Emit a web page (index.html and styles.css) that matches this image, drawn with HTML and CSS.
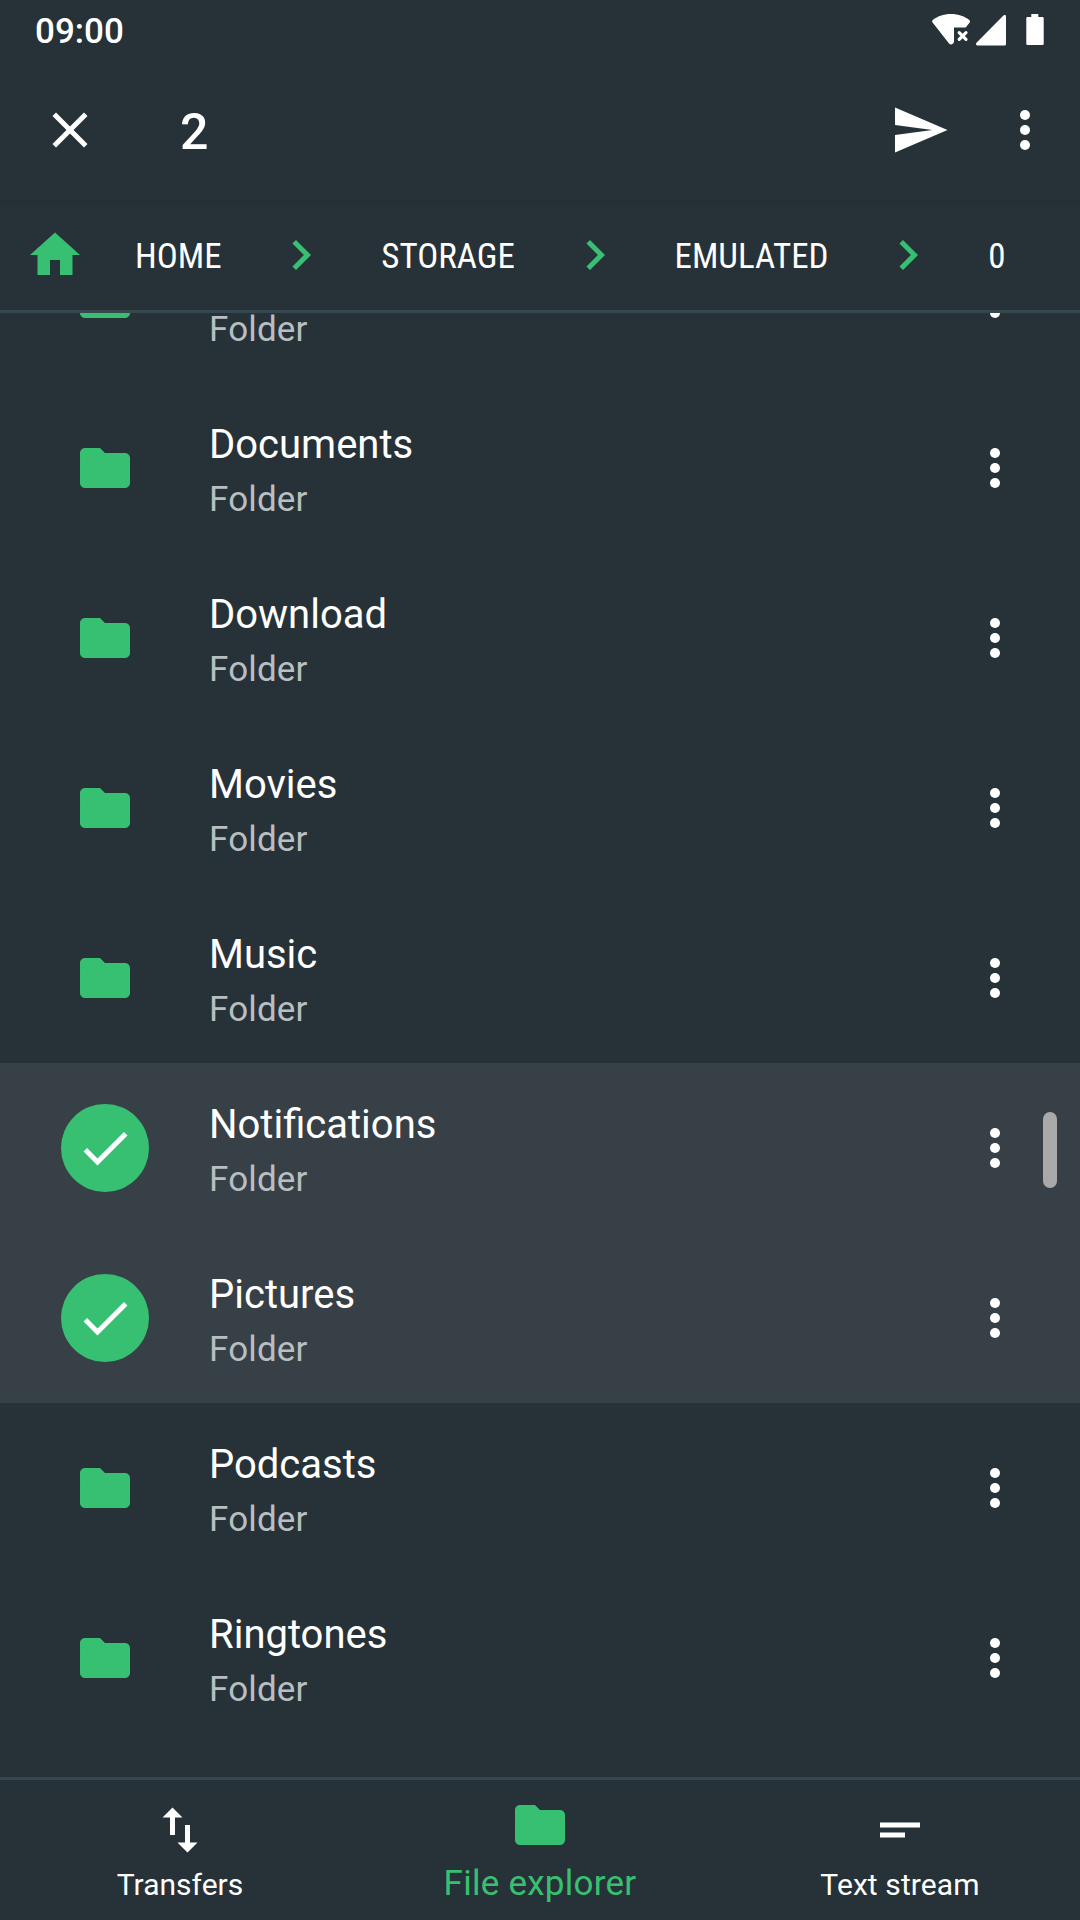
FILE: index.html
```html
<!DOCTYPE html>
<html lang="en">
<head>
<meta charset="utf-8">
<title>File explorer</title>
<link rel="stylesheet" href="styles.css">
</head>
<body>
<svg class="sprite" aria-hidden="true">
  <symbol id="folder" viewBox="0 0 24 24"><path d="M10 4H4c-1.1 0-1.99.9-1.99 2L2 18c0 1.100.9 2 2 2h16c1.100 0 2-.9 2-2V8c0-1.100-.9-2-2-2h-8l-2-2z"/></symbol>
  <symbol id="more" viewBox="0 0 24 24"><circle cx="12" cy="6" r="2"/><circle cx="12" cy="12" r="2"/><circle cx="12" cy="18" r="2"/></symbol>
  <symbol id="chevron" viewBox="0 0 24 24"><path d="M10 6L8.590 7.410 13.170 12l-4.580 4.590L10 18l6-6z"/></symbol>
  <symbol id="check" viewBox="0 0 24 24"><path d="M9 16.170L4.830 12l-1.420 1.410L9 19 21 7l-1.410-1.410z"/></symbol>
</svg>
<div class="screen">
  <header class="status">
    <span class="clock">09:00</span>
    <div class="status-icons">
      <svg class="wifi" viewBox="0 0 38 31"><path d="M19 0C11.500 0 5 2.500.6 6.200q-1 1 0 2.200L17 29.500q2 2.200 4 0l1-1.300V13.500h11.700l3.800-4.800q1-1.300 0-2.500C33 2.500 26.500 0 19 0z"/><path class="line" d="M27.200 18.600l6.800 6.800M34 18.600l-6.800 6.800"/></svg>
      <svg class="signal" viewBox="0 0 30 31"><path d="M27.200.7Q30-1.300 30 1.800V29q0 1.500-1.500 1.500H1.300Q-.8 30 .5 27.700z"/></svg>
      <svg class="battery" viewBox="0 0 18 31"><path d="M5.300 0h7v3H16.500q1.200 0 1.200 1.200V30q0 1-1.200 1H1.500Q.3 31 .3 30V4.200Q.3 3 1.500 3H5.300z"/></svg>
    </div>
  </header>
  <div class="toolbar">
    <svg class="icon" viewBox="0 0 24 24"><path d="M19 6.410L17.590 5 12 10.590 6.410 5 5 6.410 10.590 12 5 17.590 6.410 19 12 13.410 17.590 19 19 17.590 13.410 12z"/></svg>
    <h1 class="count">2</h1>
    <svg class="icon" viewBox="0 0 24 24"><path d="M2.010 21L23 12 2.010 3 2 10l15 2-15 2z"/></svg>
    <svg class="icon overflow"><use href="#more"/></svg>
  </div>
  <nav class="crumbs">
    <svg class="icon green" viewBox="0 0 24 24"><path d="M10 20v-6h4v6h5v-8h3L12 3 2 12h3v8z"/></svg>
    <span class="crumb">HOME</span>
    <svg class="icon green"><use href="#chevron"/></svg>
    <span class="crumb">STORAGE</span>
    <svg class="icon green"><use href="#chevron"/></svg>
    <span class="crumb">EMULATED</span>
    <svg class="icon green"><use href="#chevron"/></svg>
    <span class="crumb">0</span>
  </nav>
  <main class="list">
    <ul class="rows">
      <li class="row"><span class="thumb"><svg class="icon"><use href="#folder"/></svg></span><div class="info"><div class="name"></div><div class="kind">Folder</div></div><svg class="icon"><use href="#more"/></svg></li>
      <li class="row"><span class="thumb"><svg class="icon"><use href="#folder"/></svg></span><div class="info"><div class="name">Documents</div><div class="kind">Folder</div></div><svg class="icon"><use href="#more"/></svg></li>
      <li class="row"><span class="thumb"><svg class="icon"><use href="#folder"/></svg></span><div class="info"><div class="name">Download</div><div class="kind">Folder</div></div><svg class="icon"><use href="#more"/></svg></li>
      <li class="row"><span class="thumb"><svg class="icon"><use href="#folder"/></svg></span><div class="info"><div class="name">Movies</div><div class="kind">Folder</div></div><svg class="icon"><use href="#more"/></svg></li>
      <li class="row"><span class="thumb"><svg class="icon"><use href="#folder"/></svg></span><div class="info"><div class="name">Music</div><div class="kind">Folder</div></div><svg class="icon"><use href="#more"/></svg></li>
      <li class="row selected"><span class="thumb"><svg class="icon"><use href="#check"/></svg></span><div class="info"><div class="name">Notifications</div><div class="kind">Folder</div></div><svg class="icon"><use href="#more"/></svg></li>
      <li class="row selected"><span class="thumb"><svg class="icon"><use href="#check"/></svg></span><div class="info"><div class="name">Pictures</div><div class="kind">Folder</div></div><svg class="icon"><use href="#more"/></svg></li>
      <li class="row"><span class="thumb"><svg class="icon"><use href="#folder"/></svg></span><div class="info"><div class="name">Podcasts</div><div class="kind">Folder</div></div><svg class="icon"><use href="#more"/></svg></li>
      <li class="row"><span class="thumb"><svg class="icon"><use href="#folder"/></svg></span><div class="info"><div class="name">Ringtones</div><div class="kind">Folder</div></div><svg class="icon"><use href="#more"/></svg></li>
    </ul>
    <div class="scrollbar"></div>
  </main>
  <nav class="tabs">
    <a class="tab"><svg class="icon" viewBox="0 0 24 24"><path d="M9 3L5 6.990h3V14h2V6.990h3L9 3zm7 14.010V10h-2v7.010h-3L15 21l4-3.990h-3z"/></svg><span>Transfers</span></a>
    <a class="tab active"><svg class="icon"><use href="#folder"/></svg><span>File explorer</span></a>
    <a class="tab"><svg class="icon" viewBox="0 0 24 24"><path d="M4 9h16v2H4zM4 13h10v2H4z"/></svg><span class="wide">Text stream</span></a>
  </nav>
</div>
</body>
</html>
```
FILE: styles.css
```css
* { box-sizing: border-box; }

body {
  margin: 0;
  background: #273238;
  color: #fff;
  font-family: Roboto, "Liberation Sans", sans-serif;
}

svg { display: block; flex: none; fill: currentColor; }
.sprite { display: none; }
.icon { width: 60px; height: 60px; }
.green { color: #37c071; }

.screen {
  width: 1080px;
  height: 1920px;
  display: flex;
  flex-direction: column;
  overflow: hidden;
}

.status {
  height: 60px;
  flex: none;
  display: flex;
  justify-content: space-between;
  padding: 0 36.5px 0 35px;
}
.clock { font-size: 35px; font-weight: 500; line-height: 64px; }
.status-icons { display: flex; padding-top: 14px; }
.wifi { width: 38px; height: 31px; margin-right: 6px; }
.wifi .line { fill: none; stroke: currentColor; stroke-width: 3.2; stroke-linecap: round; }
.signal { width: 30px; height: 31px; margin: 1px 20px 0 0; }
.battery { width: 18px; height: 31px; }

.toolbar {
  height: 140px;
  flex: none;
  display: flex;
  align-items: center;
  padding: 0 25px 0 40px;
}
.count { flex: 1; margin: 4px 0 0 80px; font-size: 50px; font-weight: 500; line-height: 60px; }
.overflow { margin-left: 45px; }

.crumbs {
  height: 113px;
  flex: none;
  display: flex;
  align-items: center;
  padding-left: 25px;
  border-bottom: 3px solid #37474f;
  background: linear-gradient(#232d32, #273238 10px);
}
.crumb {
  margin: 0 49.7px 0 50px;
  padding-top: 4px;
  font-family: "Roboto Condensed", Roboto, sans-serif;
  font-stretch: 75%;
  font-size: 35px;
  line-height: 44px;
  white-space: nowrap;
}

.list { position: relative; flex: 1; min-height: 0; overflow: hidden; }
.rows { list-style: none; margin: -100px 0 0; padding: 0; }
.row {
  height: 170px;
  display: flex;
  align-items: center;
  padding: 0 55px 0 61px;
}
.row.selected { background: #374047; }
.thumb {
  width: 88px;
  height: 88px;
  display: grid;
  place-items: center;
  border-radius: 50%;
  color: #37c071;
}
.selected .thumb { background: #37c071; color: #fff; }
.info { flex: 1; margin-left: 60px; padding-top: 9px; }
.name { height: 54px; font-size: 40px; line-height: 52px; }
.kind { font-size: 35px; line-height: 54px; letter-spacing: 0.15px; color: #b9bec0; }
.scrollbar {
  position: absolute;
  right: 23px;
  top: 799px;
  width: 14px;
  height: 76px;
  border-radius: 7px;
  background: #a9a9a9;
}

.tabs {
  height: 143px;
  flex: none;
  display: grid;
  grid-template-columns: repeat(3, 1fr);
  border-top: 3px solid #37474f;
}
.tab {
  display: flex;
  flex-direction: column;
  align-items: center;
  padding-top: 20px;
  font-size: 30px;
  line-height: 50px;
}
.wide { letter-spacing: 0.1px; }
.tab.active {
  padding-top: 15px;
  font-size: 35px;
  line-height: 58px;
  letter-spacing: 0.25px;
  color: #37c071;
}
```
